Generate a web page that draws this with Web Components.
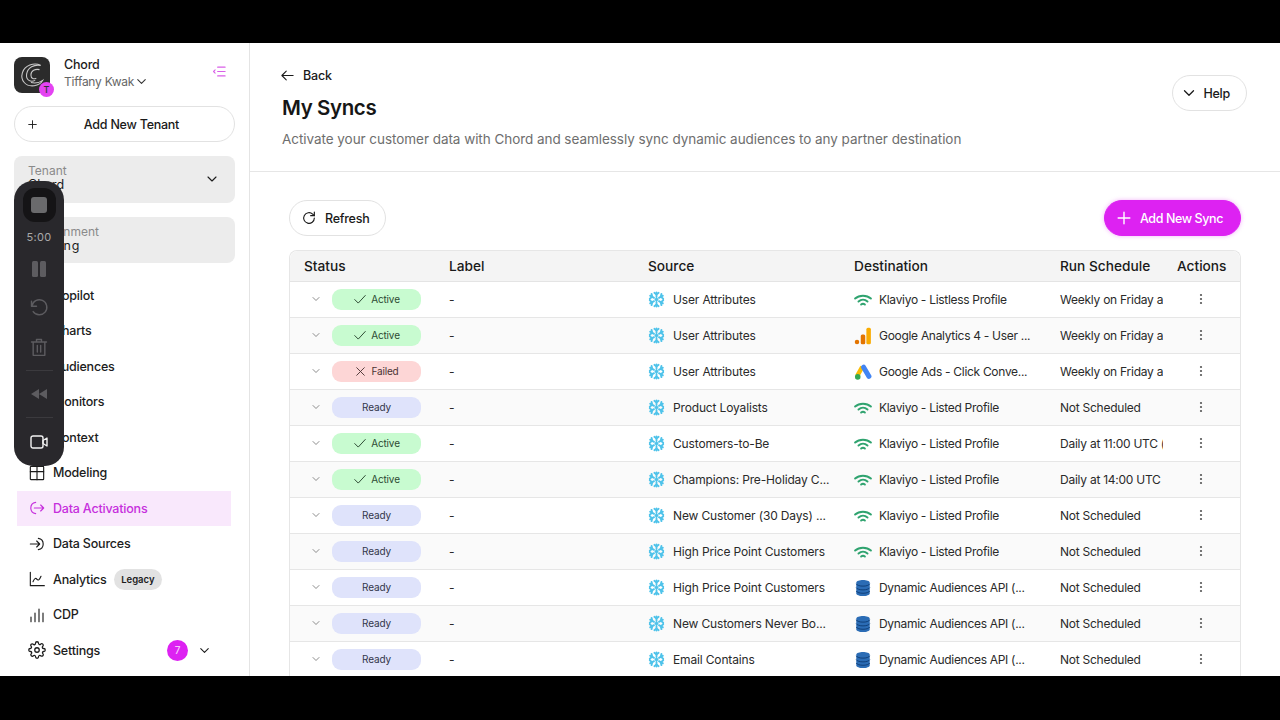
<!DOCTYPE html>
<html lang="en">
<head>
<meta charset="utf-8">
<title>My Syncs</title>
<style>
	html, body { margin: 0; padding: 0; height: 720px; background: #000; overflow: hidden; font-family: Inter, "Liberation Sans", sans-serif; }
</style>
</head>
<body>
<app-shell>
	<side-nav slot="nav"></side-nav>
	<syncs-page slot="page"></syncs-page>
	<rec-bar slot="overlay"></rec-bar>
</app-shell>
<script>
const svg = (body, size = 16, extra = "") =>
	`<svg width="${size}" height="${size}" viewBox="0 0 24 24" fill="none" stroke="currentColor" stroke-width="1.7" stroke-linecap="round" stroke-linejoin="round" ${extra}>${body}</svg>`;

const chevron = '<path d="M6 9l6 6 6-6"/>';
const plus = '<path d="M12 5v14M5 12h14"/>';

const navIcons = {
	copilot: '<circle cx="12" cy="12" r="8"/>',
	charts: '<path d="M4 20V10M12 20V4M20 20v-7"/>',
	audiences: '<circle cx="12" cy="8" r="4"/><path d="M4 21c1-5 4-7 8-7s7 2 8 7"/>',
	monitors: '<rect x="3" y="4" width="18" height="13" rx="2"/><path d="M8 21h8"/>',
	context: '<path d="M4 5h16v14H4z"/>',
	modeling: '<rect x="2" y="2" width="20" height="20" rx="1"/><path d="M2 10h20M12 2v20"/>',
	activations: '<path d="M10 3.5a8.6 8.6 0 0 0 0 17"/><path d="M8 12h14M17.5 7.5 22 12l-4.5 4.5"/>',
	sources: '<path d="M14 3.5a8.6 8.6 0 0 1 0 17"/><path d="M2 12h14M11.500 7.500 16 12l-4.500 4.500"/>',
	analytics: '<path d="M2 2v20h21"/><path d="M6 16c2-5 4-6 6-3.500s4 0 6-4.500"/>',
	cdp: '<path d="M3 15v7M9 9v13M15 3v19M21 9v13"/>',
	settings: '<circle cx="12" cy="12" r="3"/><path d="M19.400 15a1.650 1.650 0 0 0 .33 1.820l.06.06a2 2 0 1 1-2.830 2.830l-.06-.06a1.650 1.650 0 0 0-2.820 1.170V21a2 2 0 1 1-4 0v-.09A1.650 1.650 0 0 0 7.270 19.700l-.06.06a2 2 0 1 1-2.830-2.830l.06-.06A1.650 1.650 0 0 0 3.270 14H3a2 2 0 1 1 0-4h.09A1.650 1.650 0 0 0 4.300 7.270l-.06-.06a2 2 0 1 1 2.830-2.830l.06.06A1.650 1.650 0 0 0 10 3.270V3a2 2 0 1 1 4 0v.09a1.650 1.650 0 0 0 2.820 1.170l.06-.06a2 2 0 1 1 2.830 2.830l-.06.06A1.650 1.650 0 0 0 20.730 10H21a2 2 0 1 1 0 4h-.09a1.650 1.650 0 0 0-1.510 1z"/>',
};

const snowflake = `<svg width="17" height="17" viewBox="0 0 24 24" fill="none" stroke="#4fc3ea" stroke-width="2.600" stroke-linecap="round" stroke-linejoin="round"><path d="M3 6.500l5.500 3.200M21 6.500l-5.500 3.200M3 17.500l5.500-3.200M21 17.500l-5.500-3.200M12 8.500V2M12 15.500V22"/><path d="M9 2.500 12 5l3-2.500M9 21.500 12 19l3 2.500M2.500 11 6 8 5 4M21.500 11 18 8l1-4M2.500 13 6 16l-1 4M21.500 13 18 16l1 4"/><path d="M10.500 12 12 10.500 13.500 12 12 13.500z"/></svg>`;

const klaviyo = `<svg width="18" height="18" viewBox="0 0 24 24" fill="none" stroke="#2fa36f" stroke-width="2.600" stroke-linecap="round"><path d="M1.500 10C7 5 17 5 22.500 10"/><path d="M6 14c3.500-3 8.500-3 12 0"/><path d="M9.500 18c1.500-1.300 3.500-1.300 5 0"/></svg>`;

const analytics = `<svg width="18" height="18" viewBox="0 0 24 24"><rect x="16.500" y="1" width="6" height="22" rx="2" fill="#f9ab00"/><rect x="9" y="10" width="6" height="13" rx="2" fill="#e37400"/><circle cx="4" cy="20" r="3" fill="#e37400"/></svg>`;

const googleAds = `<svg width="18" height="18" viewBox="0 0 24 24"><path d="M8.500 3.500 1.800 15.500l5 3L14 6z" fill="#fbbc04"/><path d="M15.500 3.500a3.400 3.400 0 0 0-5.800 3.400l7.600 13a3.400 3.400 0 0 0 5.800-3.400z" fill="#4285f4"/><circle cx="5" cy="18.500" r="3.700" fill="#34a853"/></svg>`;

const dbIcon = `<svg width="18" height="18" viewBox="0 0 24 24"><path d="M3 5c0-5 18-5 18 0v14c0 5-18 5-18 0z" fill="#2b6cb5"/><path d="M3 6.500c2 4 16 4 18 0M3 11.500c2 4 16 4 18 0M3 16c2 4 16 4 18 0" fill="none" stroke="#0f3f78" stroke-width="1.300"/></svg>`;

class AppShell extends HTMLElement {
	constructor() {
		super();
		this.attachShadow({ mode: "open" });
		this.shadowRoot.innerHTML = `
			<style>
				:host { display: block; height: 720px; padding: 43px 0 44px; box-sizing: border-box; background: #000; }
				.frame { position: relative; display: flex; height: 633px; background: #fff; overflow: hidden; }
			</style>
			<div class="frame">
				<slot name="nav"></slot>
				<slot name="page"></slot>
				<slot name="overlay"></slot>
			</div>`;
	}
}

class PillButton extends HTMLElement {
	constructor() {
		super();
		this.attachShadow({ mode: "open" });
		this.shadowRoot.innerHTML = `
			<style>
				:host { display: inline-flex; box-sizing: border-box; height: 36px; align-items: center; border: 1px solid #e2e2e2; border-radius: 18px; background: #fff; color: #1a1a1a; font-size: 12.500px; letter-spacing: -.25px; font-weight: 500; white-space: nowrap; }
				:host([primary]) { background: #dd22f2; border-color: #dd22f2; color: #fff; letter-spacing: -.4px; box-shadow: 0 0 4px rgba(221, 34, 242, .35); }
			</style>
			<slot></slot>`;
	}
}

class NavItem extends HTMLElement {
	constructor() {
		super();
		this.attachShadow({ mode: "open" });
		const size = this.hasAttribute("big") ? 18 : 16;
		this.shadowRoot.innerHTML = `
			<style>
				:host { display: flex; box-sizing: border-box; height: 35.5px; margin: 0 18px 0 17px; padding-left: 12px; gap: 8px; align-items: center; color: #1c1c1c; font-size: 12.500px; letter-spacing: -.2px; font-weight: 500; }
				:host([active]) { background: #f9e8fc; color: #c62fdc; }
				.icon { display: flex; width: 16px; height: 16px; align-items: center; justify-content: center; }
				svg { flex: none; }
			</style>
			<span class="icon">${svg(navIcons[this.getAttribute("icon")], size, 'stroke-width="1.500"')}</span>
			<slot></slot>`;
	}
}

class SideNav extends HTMLElement {
	constructor() {
		super();
		this.attachShadow({ mode: "open" });
		this.shadowRoot.innerHTML = `
			<style>
				:host { display: flex; flex: none; flex-direction: column; box-sizing: border-box; width: 250px; height: 633px; border-right: 1px solid #e4e4e4; }
				.brand { flex: none; display: flex; height: 63px; padding: 14px 22px 0 14px; box-sizing: border-box; gap: 14px; }
				.logo { position: relative; flex: none; width: 36px; height: 36px; border-radius: 8px; background: #2b2b2b; color: #c8c8c8; display: flex; align-items: center; justify-content: center; }
				.badge { position: absolute; right: -4px; bottom: -4px; width: 15px; height: 15px; border-radius: 50%; background: #e443f2; color: #333; font-size: 9px; font-weight: 500; display: flex; align-items: center; justify-content: center; }
				.who { flex: 1; margin-top: -1px; font-size: 12.500px; letter-spacing: -.2px; font-weight: 500; color: #1c1c1c; line-height: 17px; }
				.who div + div { display: flex; align-items: center; font-size: 12px; letter-spacing: -.25px; color: #666; font-weight: 400; }
				.who svg { color: #333; margin-left: 0; }
				.collapse { color: #d95fe8; margin-top: 6px; }
				.add { flex: none; margin: 0 14px 14px 14px; display: flex; letter-spacing: -.1px; }
				.add pill-button { flex: 1; padding-left: 11px; }
				.add span { flex: 1; text-align: center; padding-right: 10px; }
				.select { flex: none; position: relative; box-sizing: border-box; height: 47px; margin: 0 14px 14px 14px; padding: 8px 14px; border-radius: 8px; background: #ececec; font-size: 12.500px; line-height: 14px; color: #1c1c1c; }
				.select small { display: block; font-size: 12px; color: #8a8a8a; }
				.select svg { position: absolute; right: 15px; top: 15px; }
				.select.env { height: 46px; }
				.select.env span { letter-spacing: 1.100px; }
				nav { flex: none; display: flex; flex-direction: column; margin-top: .5px; }
				.legacy { margin-left: -1px; padding: 0 7.500px; height: 21px; line-height: 21px; border-radius: 11px; background: #e2e2e2; font-size: 9.500px; font-weight: 600; letter-spacing: 0; }
				.count { margin-left: auto; width: 21px; height: 21px; border-radius: 50%; background: #dd22f2; color: #f6c6fb; font-size: 10px; display: flex; align-items: center; justify-content: center; }
				.more { margin: 0 19px 0 1px; display: flex; }
			</style>
			<div class="brand">
				<div class="logo">
					<svg width="30" height="30" viewBox="0 0 28 28" fill="none" stroke="currentColor" stroke-width="1"><path d="M22 5C16 2 7 5 5 12s3 13 11 12c4-.5 7-3 8-5-3 2-7 3-11 2"/><path d="M22 5c-6-1-12 2-13 8s4 8 8 6"/><path d="M21 9c-4-1-8 1-8 5s3 4 5 3"/></svg>
					<div class="badge">T</div>
				</div>
				<div class="who">
					<div>Chord</div>
					<div>Tiffany Kwak${svg(chevron, 15, 'stroke-width="2"')}</div>
				</div>
				<span class="collapse">${svg('<path d="M9 5h12M9 12h12M9 19h12M5 9.500 2.500 12 5 14.500"/>', 15)}</span>
			</div>
			<div class="add"><pill-button>${svg(plus, 13)}<span>Add New Tenant</span></pill-button></div>
			<div class="select"><small>Tenant</small>Chord${svg(chevron, 16, 'stroke-width="2.500"')}</div>
			<div class="select env"><small>Environment</small><span>Staging</span></div>
			<nav>
				<nav-item icon="copilot">Copilot</nav-item>
				<nav-item icon="charts">Charts</nav-item>
				<nav-item icon="audiences">Audiences</nav-item>
				<nav-item icon="monitors">Monitors</nav-item>
				<nav-item icon="context">Context</nav-item>
				<nav-item icon="modeling">Modeling</nav-item>
				<nav-item icon="activations" active>Data Activations</nav-item>
				<nav-item icon="sources">Data Sources</nav-item>
				<nav-item icon="analytics">Analytics<span class="legacy">Legacy</span></nav-item>
				<nav-item icon="cdp">CDP</nav-item>
				<nav-item icon="settings" big>Settings<span class="count">7</span><span class="more">${svg(chevron, 15)}</span></nav-item>
			</nav>`;
	}
}

class StatusPill extends HTMLElement {
	constructor() {
		super();
		this.attachShadow({ mode: "open" });
		const kind = this.getAttribute("kind");
		const mark = kind === "Active" ? svg('<path d="M3 13l6 6L21 6"/>', 14, 'stroke-width="1.400"')
			: kind === "Failed" ? svg('<path d="M5 5l14 14M19 5L5 19"/>', 13, 'stroke-width="1.400"') : "";
		this.shadowRoot.innerHTML = `
			<style>
				:host { display: flex; box-sizing: border-box; width: 89px; height: 21px; align-items: center; justify-content: center; gap: 4px; border-radius: 9px; font-size: 10px; color: #333; }
				:host([kind="Active"]) { background: #c8fbd0; color: #2d4a33; }
				:host([kind="Failed"]) { background: #fdd6d6; color: #4a3333; }
				:host([kind="Ready"]) { background: #dfe3fb; color: #33364a; }
				svg { flex: none; }
			</style>
			${mark}<span>${kind}</span>`;
	}
}

class SyncRow extends HTMLElement {
	constructor() {
		super();
		this.attachShadow({ mode: "open" });
		const get = (name) => this.getAttribute(name);
		this.shadowRoot.innerHTML = `
			<style>
				:host { display: grid; grid-template-columns: 145px 199px 206px 206px 117px 1fr; height: 36px; box-sizing: border-box; border-bottom: 1px solid #e6e6e6; align-items: center; font-size: 12px; letter-spacing: -.15px; color: #2a2a2a; background: #fff; }
				:host(:nth-child(even)) { background: #fafafa; }
				.status { display: flex; align-items: center; padding-left: 20px; margin-top: -1px; color: #777; }
				.status svg { margin-right: 10px; flex: none; }
				.cell { padding-left: 14px; white-space: nowrap; overflow: hidden; display: flex; align-items: center; }
				.cell svg { flex: none; margin-right: 8px; }
				.cell.dest { letter-spacing: -.3px; }
				.cell.dest svg { margin-right: 7px; }
				.cell.when { letter-spacing: -.25px; }
				.dots { padding-left: 32px; margin-top: -1px; display: flex; color: #555; }
			</style>
			<div class="status">${svg(chevron, 12)}<status-pill kind="${get("status")}"></status-pill></div>
			<div class="cell">-</div>
			<div class="cell">${snowflake}<span>${get("source")}</span></div>
			<div class="cell dest">${SyncRow.icons[get("icon")]}<span>${get("dest")}</span></div>
			<div class="cell when">${get("schedule")}</div>
			<div class="dots"><svg width="12" height="12" viewBox="0 0 12 12" fill="currentColor"><circle cx="6" cy="2" r="1.100"/><circle cx="6" cy="6" r="1.100"/><circle cx="6" cy="10" r="1.100"/></svg></div>`;
	}
}
SyncRow.icons = { klaviyo, analytics, ads: googleAds, db: dbIcon };

class SyncTable extends HTMLElement {
	constructor() {
		super();
		this.attachShadow({ mode: "open" });
		this.shadowRoot.innerHTML = `
			<style>
				:host { display: block; border: 1px solid #e6e6e6; border-bottom: 0; border-radius: 8px 8px 0 0; }
				.head { display: grid; grid-template-columns: 145px 199px 206px 206px 117px 1fr; height: 30px; align-items: center; background: #f4f4f4; border-bottom: 1px solid #e4e4e4; border-radius: 8px 8px 0 0; font-size: 13.700px; font-weight: 500; color: #1a1a1a; }
				.head div { padding-left: 14px; white-space: nowrap; }
			</style>
			<div class="head">
				<div>Status</div><div>Label</div><div>Source</div><div>Destination</div><div>Run Schedule</div><div>Actions</div>
			</div>
			<slot></slot>`;
	}
}

class SyncsPage extends HTMLElement {
	constructor() {
		super();
		this.attachShadow({ mode: "open" });
		const weekly = "Weekly on Friday at 11:00 UTC";
		const rows = [
			["Active", "User Attributes", "klaviyo", "Klaviyo - Listless Profile", weekly],
			["Active", "User Attributes", "analytics", "Google Analytics 4 - User ...", weekly],
			["Failed", "User Attributes", "ads", "Google Ads - Click Conve...", weekly],
			["Ready", "Product Loyalists", "klaviyo", "Klaviyo - Listed Profile", "Not Scheduled"],
			["Active", "Customers-to-Be", "klaviyo", "Klaviyo - Listed Profile", "Daily at 11:00 UTC (Every day)"],
			["Active", "Champions: Pre-Holiday C...", "klaviyo", "Klaviyo - Listed Profile", "Daily at 14:00 UTC"],
			["Ready", "New Customer (30 Days) ...", "klaviyo", "Klaviyo - Listed Profile", "Not Scheduled"],
			["Ready", "High Price Point Customers", "klaviyo", "Klaviyo - Listed Profile", "Not Scheduled"],
			["Ready", "High Price Point Customers", "db", "Dynamic Audiences API (...", "Not Scheduled"],
			["Ready", "New Customers Never Bo...", "db", "Dynamic Audiences API (...", "Not Scheduled"],
			["Ready", "Email Contains", "db", "Dynamic Audiences API (...", "Not Scheduled"],
		];
		this.shadowRoot.innerHTML = `
			<style>
				:host { display: block; flex: 1; min-width: 0; height: 633px; overflow: hidden; }
				header { display: flex; justify-content: space-between; box-sizing: border-box; height: 129px; padding: 23px 33px 0 32px; border-bottom: 1px solid #e6e6e6; }
				.back { display: flex; align-items: center; gap: 8px; height: 18px; margin-left: -2px; font-size: 12.500px; letter-spacing: -.2px; font-weight: 500; color: #1a1a1a; }
				h1 { margin: 11px 0 0; font-size: 20.500px; line-height: 26px; font-weight: 600; color: #161616; letter-spacing: -.4px; }
				p { margin: 9px 0 0; font-size: 13.500px; letter-spacing: -.05px; line-height: 18px; color: #6e6e6e; }
				.help { margin-top: 9px; padding: 0 16px 0 7px; gap: 5px; }
				.content { padding: 28px 39px 0 39px; }
				.bar { display: flex; justify-content: space-between; margin-bottom: 14px; }
				.refresh { padding: 0 16px 0 11px; gap: 8px; }
				.new { padding: 0 17px 0 9px; gap: 6px; }
			</style>
			<header>
				<div>
					<div class="back">${svg('<path d="M21 12H3M10 5l-7 7 7 7"/>', 15)}Back</div>
					<h1>My Syncs</h1>
					<p>Activate your customer data with Chord and seamlessly sync dynamic audiences to any partner destination</p>
				</div>
				<pill-button class="help">${svg(chevron, 18, 'stroke-width="2"')}Help</pill-button>
			</header>
			<div class="content">
				<div class="bar">
					<pill-button class="refresh">${svg('<path d="M20 12a8 8 0 1 1-2.500-5.800L20 8.500"/><path d="M20 3v5.500h-5.500"/>', 16, 'stroke-width="2.200"')}Refresh</pill-button>
					<pill-button class="new" primary>${svg(plus, 20)}Add New Sync</pill-button>
				</div>
				<sync-table>
					${rows.map(([status, source, icon, dest, schedule]) => `<sync-row status="${status}" source="${source}" icon="${icon}" dest="${dest}" schedule="${schedule}"></sync-row>`).join("")}
				</sync-table>
			</div>`;
	}
}

class RecBar extends HTMLElement {
	constructor() {
		super();
		this.attachShadow({ mode: "open" });
		this.shadowRoot.innerHTML = `
			<style>
				:host { position: absolute; left: 14px; top: 138px; display: flex; flex-direction: column; align-items: center; box-sizing: border-box; width: 50px; height: 285px; padding-top: 7px; border-radius: 19px; background: #29282c; color: #5d5c60; }
				.stop { display: flex; flex: none; width: 33px; height: 34px; align-items: center; justify-content: center; border-radius: 12px; background: #151416; }
				.stop i { width: 16px; height: 16px; border-radius: 3px; background: #6a6a6c; }
				.time { margin-top: 8px; font-size: 11px; line-height: 14px; letter-spacing: .3px; color: #a9a9aa; }
				.tool { display: flex; flex: none; height: 40px; align-items: center; justify-content: center; }
				.pause { height: 37px; margin-top: 6px; }
				hr { width: 27px; margin: 0; border: 0; border-top: 1px solid #3b3a3e; }
				.cam { color: #f2f2f2; height: 48px; }
			</style>
			<div class="stop"><i></i></div>
			<div class="time">5:00</div>
			<div class="tool pause"><svg width="18" height="18" viewBox="0 0 18 18" fill="currentColor"><rect x="2" y="1" width="6" height="16" rx="1.500"/><rect x="10" y="1" width="6" height="16" rx="1.500"/></svg></div>
			<div class="tool">${svg('<path d="M3 5v6h6"/><path d="M3.500 11A9 9 0 1 1 5 17.500"/>', 20, 'stroke-width="1.500"')}</div>
			<div class="tool">${svg('<path d="M3 6h18M9 6V3h6v3M5 6v16h14V6M10 10v8M14 10v8"/>', 20, 'stroke-width="1.500"')}</div>
			<hr style="margin-top: 3px">
			<div class="tool" style="height: 46px"><svg width="18" height="12" viewBox="0 0 18 12" fill="currentColor"><path d="M9 1 1 6l8 5zM17 1 9 6l8 5z"/></svg></div>
			<hr>
			<div class="tool cam"><svg width="18" height="14" viewBox="0 0 18 14" fill="none" stroke="currentColor" stroke-width="1.400" stroke-linejoin="round"><rect x="1" y="1" width="12" height="12" rx="2"/><path d="M13 5.500 17 3v8l-4-2.500z"/></svg></div>`;
	}
}

customElements.define("pill-button", PillButton);
customElements.define("nav-item", NavItem);
customElements.define("status-pill", StatusPill);
customElements.define("sync-row", SyncRow);
customElements.define("sync-table", SyncTable);
customElements.define("side-nav", SideNav);
customElements.define("syncs-page", SyncsPage);
customElements.define("rec-bar", RecBar);
customElements.define("app-shell", AppShell);
</script>
</body>
</html>
